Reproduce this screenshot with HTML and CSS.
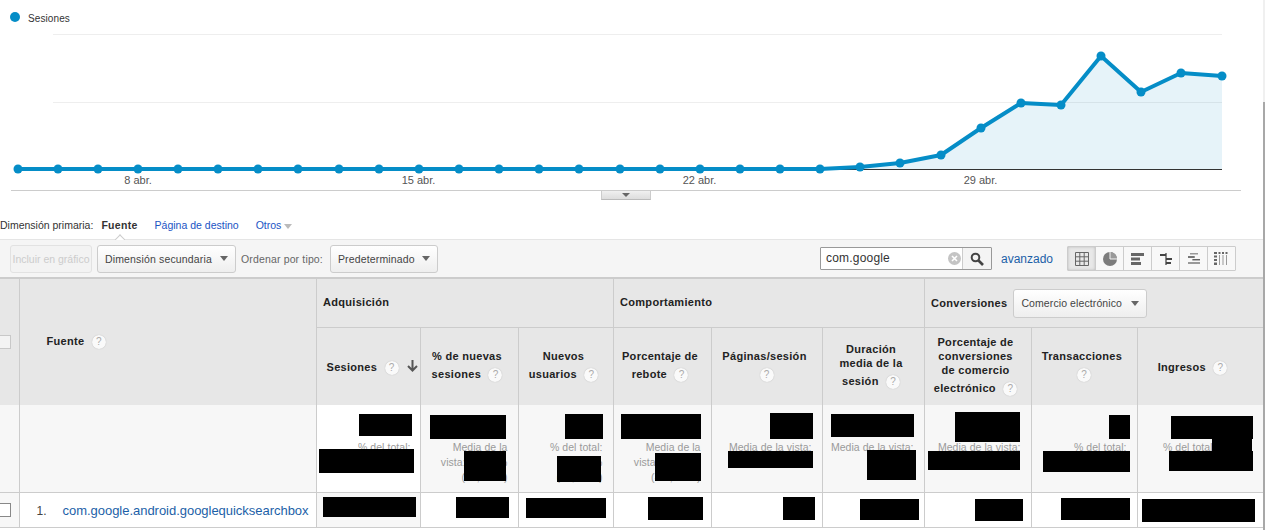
FILE: index.html
```html
<!DOCTYPE html>
<html lang="es">
<head>
  <meta charset="UTF-8">
  <title>Fuente - Sesiones</title>
  <link rel="stylesheet" href="styles.css">
</head>
<body>

<div class="scrollbar"><div class="scrollbar-thumb"></div></div>

<section class="chart">
  <svg class="chart-svg" width="1265" height="200" viewBox="0 0 1265 200">
    <circle cx="15" cy="17" r="5" fill="#058dc7"/>
    <text x="28" y="22" class="legend">Sesiones</text>
    <line x1="53" y1="34.5" x2="1222" y2="34.5" stroke="#eee"/>
    <line x1="53" y1="102.5" x2="1222" y2="102.5" stroke="#eee"/>
    <polygon fill="#058dc7" fill-opacity="0.1" points="820,169 860,167 900,163 941,155 981,128 1021,103 1061,105 1101,56 1141,92 1181,73 1222,76 1222,169"/>
    <line x1="18" y1="169.5" x2="1222" y2="169.5" stroke="#333"/>
    <polyline fill="none" stroke="#058dc7" stroke-width="4" stroke-linejoin="round" points="18,169 820,169 860,167 900,163 941,155 981,128 1021,103 1061,105 1101,56 1141,92 1181,73 1222,76"/>
    <g fill="#058dc7">
      <circle cx="18" cy="169" r="4.5"/><circle cx="58" cy="169" r="4.5"/><circle cx="98" cy="169" r="4.5"/>
      <circle cx="138" cy="169" r="4.5"/><circle cx="178" cy="169" r="4.5"/><circle cx="218" cy="169" r="4.5"/>
      <circle cx="258" cy="169" r="4.5"/><circle cx="298" cy="169" r="4.5"/><circle cx="339" cy="169" r="4.5"/>
      <circle cx="379" cy="169" r="4.5"/><circle cx="419" cy="169" r="4.5"/><circle cx="459" cy="169" r="4.5"/>
      <circle cx="499" cy="169" r="4.5"/><circle cx="539" cy="169" r="4.5"/><circle cx="579" cy="169" r="4.5"/>
      <circle cx="620" cy="169" r="4.5"/><circle cx="660" cy="169" r="4.5"/><circle cx="700" cy="169" r="4.5"/>
      <circle cx="740" cy="169" r="4.5"/><circle cx="780" cy="169" r="4.5"/><circle cx="820" cy="169" r="4.5"/>
      <circle cx="860" cy="167" r="4.5"/><circle cx="900" cy="163" r="4.5"/><circle cx="941" cy="155" r="4.5"/>
      <circle cx="981" cy="128" r="4.5"/><circle cx="1021" cy="103" r="4.5"/><circle cx="1061" cy="105" r="4.5"/>
      <circle cx="1101" cy="56" r="4.5"/><circle cx="1141" cy="92" r="4.5"/><circle cx="1181" cy="73" r="4.5"/>
      <circle cx="1222" cy="76" r="4.5"/>
    </g>
    <text x="138" y="184" class="tick">8 abr.</text>
    <text x="418.5" y="184" class="tick">15 abr.</text>
    <text x="699.5" y="184" class="tick">22 abr.</text>
    <text x="980.5" y="184" class="tick">29 abr.</text>
    <line x1="11" y1="190.5" x2="1241" y2="190.5" stroke="#ccc"/>
  </svg>
  <div class="chart-handle"><span class="handle-arrow"></span></div>
</section>

<nav class="dimensions">
  <span class="dim-label">Dimensión primaria:</span>
  <span class="dim-current">Fuente</span>
  <a class="dim-link">Página de destino</a>
  <a class="dim-link">Otros <span class="caret caret-light"></span></a>
</nav>

<div class="toolbar">
  <div class="toolbar-left">
    <button class="btn btn-disabled">Incluir en gráfico</button>
    <button class="btn btn-secondary-dim">Dimensión secundaria <span class="caret"></span></button>
    <span class="sort-label">Ordenar por tipo:</span>
    <button class="btn btn-sort">Predeterminado <span class="caret"></span></button>
  </div>
  <div class="toolbar-right">
    <div class="search">
      <span class="search-text">com.google</span>
      <span class="search-clear">
        <svg width="13" height="13" viewBox="0 0 13 13"><circle cx="6.5" cy="6.5" r="6.5" fill="#c4c4c4"/><path d="M4 4l5 5M9 4l-5 5" stroke="#fff" stroke-width="1.6"/></svg>
      </span>
      <span class="search-go">
        <svg width="14" height="14" viewBox="0 0 14 14"><circle cx="5.5" cy="5.5" r="3.8" fill="none" stroke="#444" stroke-width="2"/><path d="M8.5 8.5l4.5 4.5" stroke="#444" stroke-width="2.6"/></svg>
      </span>
    </div>
    <a class="advanced">avanzado</a>
    <div class="views">
      <span class="view view-on">
        <svg width="14" height="14" viewBox="0 0 14 14"><path d="M.5.5h13v13H.5zM.5 4.8h13M.5 9.2h13M4.8.5v13M9.2.5v13" fill="none" stroke="#666"/></svg>
      </span>
      <span class="view">
        <svg width="14" height="14" viewBox="0 0 14 14"><circle cx="7" cy="7" r="7" fill="#7c7c7c"/><path d="M7 0a7 7 0 0 1 7 7H7z" fill="#999"/><path d="M7 0v7h7" fill="none" stroke="#f4f4f4"/></svg>
      </span>
      <span class="view">
        <svg width="14" height="12" viewBox="0 0 14 12"><path d="M0 0h13v3H0zM0 4.5h9v3H0zM0 9h10v3H0z" fill="#666"/></svg>
      </span>
      <span class="view">
        <svg width="14" height="14" viewBox="0 0 14 14"><path d="M7 1v12" stroke="#555" stroke-width="1.4" fill="none"/><path d="M1 3h6M7 7h6M7 11h5" stroke="#444" stroke-width="2" fill="none"/></svg>
      </span>
      <span class="view">
        <svg width="14" height="14" viewBox="0 0 14 14"><path d="M3 1h8v1.5H3zM1 4h7v2H1zM5 7h8v1.5H5zM1 10h12v2H1z" fill="#999"/><path d="M1 5h6M6 7.7h7" stroke="#555"/></svg>
      </span>
      <span class="view">
        <svg width="15" height="13" viewBox="0 0 15 13"><path d="M0 0h3v2H0zM0 3.500h3v2H0zM0 7h3v2H0zM0 10.500h3V13H0zM4.500 0h2v2h-2zM8 0h2v2H8zM11.500 0h2v2h-2z" fill="#666"/><path d="M5.500 3v10M9 3v10M12.500 3v10" stroke="#999" fill="none"/></svg>
      </span>
    </div>
  </div>
</div>

<div class="report">
  <table class="report-table">
    <colgroup>
      <col class="c-check"><col class="c-source"><col class="c-1"><col class="c-2"><col class="c-3">
      <col class="c-4"><col class="c-5"><col class="c-6"><col class="c-7"><col class="c-8"><col class="c-9">
    </colgroup>
    <thead>
      <tr class="row-groups">
        <th rowspan="2" class="th-check"><span class="check check-head"></span></th>
        <th rowspan="2" class="th-source">Fuente <i class="help">?</i></th>
        <th colspan="3" class="th-group">Adquisición</th>
        <th colspan="3" class="th-group">Comportamiento</th>
        <th colspan="3" class="th-group th-conv">
          <span class="conv-wrap">Conversiones
            <button class="btn btn-conv">Comercio electrónico <span class="caret"></span></button>
          </span>
        </th>
      </tr>
      <tr class="row-metrics">
        <th class="th-sessions">Sesiones <i class="help">?</i><span class="sort-arrow">
          <svg width="11" height="12" viewBox="0 0 11 12"><path d="M5.500 0v10M1 6l4.500 4.500L10 6" fill="none" stroke="#555" stroke-width="2"/></svg>
        </span></th>
        <th>% de nuevas sesiones <i class="help">?</i></th>
        <th>Nuevos usuarios <i class="help">?</i></th>
        <th>Porcentaje de rebote <i class="help">?</i></th>
        <th>Páginas/sesión <i class="help">?</i></th>
        <th>Duración media de la sesión <i class="help">?</i></th>
        <th>Porcentaje de conversiones de comercio electrónico <i class="help">?</i></th>
        <th>Transacciones <i class="help">?</i></th>
        <th class="th-income">Ingresos <i class="help">?</i></th>
      </tr>
    </thead>
    <tbody>
      <tr class="row-total">
        <td></td>
        <td class="td-source"></td>
        <td class="metric metric-on">% del total:</td>
        <td class="metric">Media de la<br>vista: 00,00 %<br>(00,00 %)</td>
        <td class="metric">% del total:<br>00,00 %<br>(00,00 %)</td>
        <td class="metric">Media de la<br>vista: 00,00 %<br>(-00,00 %)</td>
        <td class="metric">Media de la vista:</td>
        <td class="metric">Media de la vista:</td>
        <td class="metric">Media de la vista:</td>
        <td class="metric">% del total:</td>
        <td class="metric metric-short">% del total</td>
      </tr>
      <tr class="row-data">
        <td class="td-check"><span class="check"></span></td>
        <td class="td-source"><span class="row-num">1.</span><a class="row-link">com.google.android.googlequicksearchbox</a></td>
        <td></td><td></td><td></td><td></td><td></td><td></td><td></td><td></td><td></td>
      </tr>
    </tbody>
  </table>

  <!-- redacted values, painted over the table -->
  <div class="redact r1"></div><div class="redact r2"></div><div class="redact r3"></div><div class="redact r4"></div>
  <div class="redact r5"></div><div class="redact r6"></div><div class="redact r7"></div><div class="redact r8"></div>
  <div class="redact r9"></div><div class="redact r10"></div><div class="redact r11"></div><div class="redact r12"></div>
  <div class="redact r13"></div><div class="redact r14"></div><div class="redact r15"></div><div class="redact r16"></div>
  <div class="redact r17"></div><div class="redact r18"></div><div class="redact r19"></div>
  <div class="redact d1"></div><div class="redact d2"></div><div class="redact d3"></div><div class="redact d4"></div>
  <div class="redact d5"></div><div class="redact d6"></div><div class="redact d7"></div><div class="redact d8"></div>
  <div class="redact d9"></div>
</div>

</body>
</html>
```

FILE: styles.css
```css
html, body {
  margin: 0;
  padding: 0;
  height: 530px;
  overflow: hidden;
}
body {
  font-family: "Liberation Sans", Arial, sans-serif;
  font-size: 11px;
  color: #333;
  background: white;
}
.scrollbar {
  position: absolute;
  top: 0;
  right: 0;
  width: 2px;
  height: 530px;
  background: #f0f0f0;
  z-index: 2;
}
.scrollbar-thumb {
  height: 428px;
  margin-top: 102px;
  background: #a8a8a8;
}

/* chart */
.chart {
  position: relative;
  height: 200px;
}
.chart-svg {
  display: block;
}
.legend {
  font: 10px "Liberation Sans", Arial, sans-serif;
  letter-spacing: 0.1px;
  fill: #333;
}
.tick {
  font: 11px "Liberation Sans", Arial, sans-serif;
  fill: #555;
  text-anchor: middle;
}
.chart-handle {
  position: absolute;
  left: 601px;
  top: 190px;
  width: 48px;
  height: 8px;
  background: linear-gradient(#f0f0f0, #ddd);
  border: 1px solid #ccc;
  border-bottom-color: #bbb;
  display: flex;
  justify-content: center;
  align-items: center;
}
.handle-arrow {
  border-top: 4px solid #666;
  border-left: 4px solid transparent;
  border-right: 4px solid transparent;
}

/* primary dimension */
.dimensions {
  height: 40px;
  line-height: 50px;
  display: flex;
  gap: 17px;
  white-space: nowrap;
  font-size: 10.5px;
  box-sizing: border-box;
  border-bottom: 1px solid #e5e5e5;
}
.dim-label {
  margin-right: -9px;
  color: #333;
}
.dim-current {
  position: relative;
  font-weight: bold;
  letter-spacing: 0.3px;
  color: #333;
}
.dim-current::after {
  content: "";
  position: absolute;
  left: 15px;
  bottom: -5px;
  width: 7px;
  height: 7px;
  background: white;
  border-top: 1px solid #ccc;
  border-left: 1px solid #ccc;
  transform: rotate(45deg);
}
.dim-link {
  color: #1a54c4;
}
.caret {
  display: inline-block;
  vertical-align: middle;
  border-top: 5px solid #666;
  border-left: 4px solid transparent;
  border-right: 4px solid transparent;
}
.caret-light {
  border-top-color: #bbb;
}

/* toolbar */
.toolbar {
  position: relative;
  height: 38px;
  background: #f5f5f5;
  border-bottom: 1px solid #ccc;
  display: flex;
  justify-content: space-between;
  align-items: center;
  padding: 0 29px 0 10px;
  box-sizing: border-box;
}
.toolbar-left, .toolbar-right {
  display: flex;
  align-items: center;
}
.btn {
  display: flex;
  align-items: center;
  justify-content: space-between;
  height: 28px;
  box-sizing: border-box;
  font: 10.5px "Liberation Sans", Arial, sans-serif;
  letter-spacing: 0.15px;
  color: #444;
  background: linear-gradient(#fff, #eee);
  border: 1px solid #ccc;
  border-radius: 3px;
  padding: 0 7px;
  white-space: nowrap;
}
.btn-disabled {
  width: 82px;
  padding: 0;
  justify-content: center;
  letter-spacing: 0;
  color: #ccc;
  background: #f3f3f3;
  border-color: #e2e2e2;
}
.btn-secondary-dim {
  width: 139px;
  margin-left: 5px;
}
.sort-label {
  margin: 0 7px 0 5px;
  color: #666;
  font-size: 10.5px;
  letter-spacing: 0.15px;
}
.btn-sort {
  width: 108px;
}
.search {
  display: flex;
  width: 172px;
  height: 23px;
  box-sizing: border-box;
  background: white;
  border: 1px solid #999;
  border-radius: 1px;
  align-items: center;
}
.search-text {
  flex: 1;
  padding-left: 5px;
  font-size: 12px;
  letter-spacing: 0.2px;
  color: #333;
  position: relative;
  top: -1px;
}
.search-clear {
  display: flex;
  margin-right: 1px;
}
.search-go {
  width: 28px;
  height: 21px;
  display: flex;
  align-items: center;
  justify-content: center;
  background: #f4f4f4;
  border-left: 1px solid #ccc;
}
.advanced {
  color: #1c5fa8;
  font-size: 12px;
  margin: 0 14px 0 9px;
}
.views {
  display: flex;
  width: 169px;
  height: 25px;
  border: 1px solid #ccc;
  box-sizing: border-box;
  border-radius: 1px;
}
.view {
  flex: 1;
  display: flex;
  align-items: center;
  justify-content: center;
  border-left: 1px solid #ccc;
  background: #f8f8f8;
}
.view:first-child {
  border-left: none;
}
.view-on {
  background: #e8e8e8;
  box-shadow: inset 0 0 3px #bbb;
}

/* table */
.report {
  position: relative;
}
.report-table {
  table-layout: fixed;
  border-collapse: collapse;
  width: 1263px;
}
.c-check { width: 19px; }
.c-source { width: 297px; }
.c-1 { width: 104px; }
.c-2 { width: 98px; }
.c-3 { width: 95px; }
.c-4 { width: 98px; }
.c-5 { width: 111px; }
.c-6 { width: 102px; }
.c-7 { width: 107px; }
.c-8 { width: 106px; }
.c-9 { width: 126px; }
th, td {
  border: 1px solid #ccc;
  padding: 0;
}
tr > :first-child {
  border-left: none;
}
thead th {
  background: #e7e7e7;
  font-size: 11px;
  letter-spacing: 0.3px;
  color: #222;
  line-height: 14px;
  padding: 3px 10px 0 6px;
}
.row-metrics th, .th-check, .th-source {
  border-bottom: none;
}
thead th.th-check {
  padding: 0;
}
.th-source {
  text-align: left;
}
thead th.th-source {
  padding: 0 0 0 27px;
}
.th-group {
  text-align: left;
}
thead th.th-group {
  padding: 0 0 3px 6.5px;
}
thead th.th-conv {
  padding-bottom: 0;
}
.row-groups {
  height: 49px;
}
.row-metrics {
  height: 77px;
}
.conv-wrap {
  display: flex;
  align-items: center;
  gap: 6px;
}
.btn-conv {
  width: 134px;
  height: 29px;
  font-weight: normal;
  letter-spacing: 0.1px;
}
thead th.th-sessions {
  white-space: nowrap;
  text-align: left;
  padding: 3px 0 0 10px;
}
thead th.th-income {
  padding-right: 21px;
}
.sort-arrow {
  margin-left: 5px;
  vertical-align: -1px;
}
.help {
  display: inline-block;
  width: 14px;
  height: 14px;
  margin: 5px 0 5px 4px;
  border-radius: 50%;
  background: #fafafa;
  box-shadow: 0 0 1px #aaa;
  font: normal 10px/14px "Liberation Sans", Arial, sans-serif;
  color: #aaa;
  text-align: center;
  letter-spacing: 0;
  vertical-align: middle;
}
.row-total {
  height: 88px;
  background: #f7f7f7;
}
.row-total td {
  border-top: none;
}
.metric {
  font-size: 10.5px;
  line-height: 15px;
  color: #9a9a9a;
  text-align: right;
  vertical-align: top;
  padding: 35px 10px 0 4px;
  letter-spacing: 0.05px;
}
.metric-on {
  background: white;
  padding-right: 9px;
}
.metric-short {
  padding-right: 50px;
}
.row-data {
  height: 35px;
}
.row-data td {
  border-top-color: #ddd;
}
.td-source {
  background: #f7f7f7;
}
.row-data .td-source {
  background: white;
}
.td-check {
  background: #f7f7f7;
}
.row-data td:nth-child(3) {
  background: #f7f7f7;
}
.check {
  display: block;
  width: 12px;
  height: 12px;
  margin-left: -3px;
  background: white;
  border: 1px solid #888;
}
.check-head {
  background: #f3f3f3;
  border-color: #c8c8c8;
}
.row-num {
  display: inline-block;
  width: 26px;
  margin-left: 17px;
  color: #444;
  font-size: 12px;
}
.row-link {
  color: #1c5fa8;
  font-size: 13px;
  letter-spacing: -0.03px;
}

/* redaction boxes, offsets from the top-left of .report (y 278 on the page) */
.redact {
  position: absolute;
  background: black;
}
.r1 { left: 359px; top: 136px; width: 53px; height: 22px; }
.r2 { left: 319px; top: 171px; width: 95px; height: 24px; }
.r3 { left: 430px; top: 137px; width: 76px; height: 24px; }
.r4 { left: 464px; top: 173px; width: 42px; height: 30px; }
.r5 { left: 565px; top: 136px; width: 38px; height: 25px; }
.r6 { left: 557px; top: 178px; width: 44px; height: 26px; }
.r7 { left: 621px; top: 136px; width: 80px; height: 25px; }
.r8 { left: 655px; top: 175px; width: 46px; height: 28px; }
.r9 { left: 770px; top: 135px; width: 43px; height: 26px; }
.r10 { left: 728px; top: 173px; width: 85px; height: 17px; }
.r11 { left: 831px; top: 136px; width: 83px; height: 23px; }
.r12 { left: 867px; top: 172px; width: 49px; height: 30px; }
.r13 { left: 955px; top: 134px; width: 65px; height: 30px; }
.r14 { left: 928px; top: 173px; width: 92px; height: 19px; }
.r15 { left: 1109px; top: 137px; width: 21px; height: 24px; }
.r16 { left: 1043px; top: 173px; width: 87px; height: 21px; }
.r17 { left: 1171px; top: 138px; width: 82px; height: 23px; }
.r18 { left: 1212px; top: 161px; width: 40px; height: 12px; }
.r19 { left: 1169px; top: 173px; width: 84px; height: 20px; }
.d1 { left: 323px; top: 219px; width: 93px; height: 20px; }
.d2 { left: 456px; top: 219px; width: 53px; height: 21px; }
.d3 { left: 526px; top: 220px; width: 80px; height: 20px; }
.d4 { left: 648px; top: 219px; width: 55px; height: 23px; }
.d5 { left: 783px; top: 219px; width: 32px; height: 23px; }
.d6 { left: 860px; top: 221px; width: 59px; height: 21px; }
.d7 { left: 975px; top: 221px; width: 48px; height: 22px; }
.d8 { left: 1061px; top: 220px; width: 69px; height: 22px; }
.d9 { left: 1142px; top: 221px; width: 113px; height: 23px; }
```
